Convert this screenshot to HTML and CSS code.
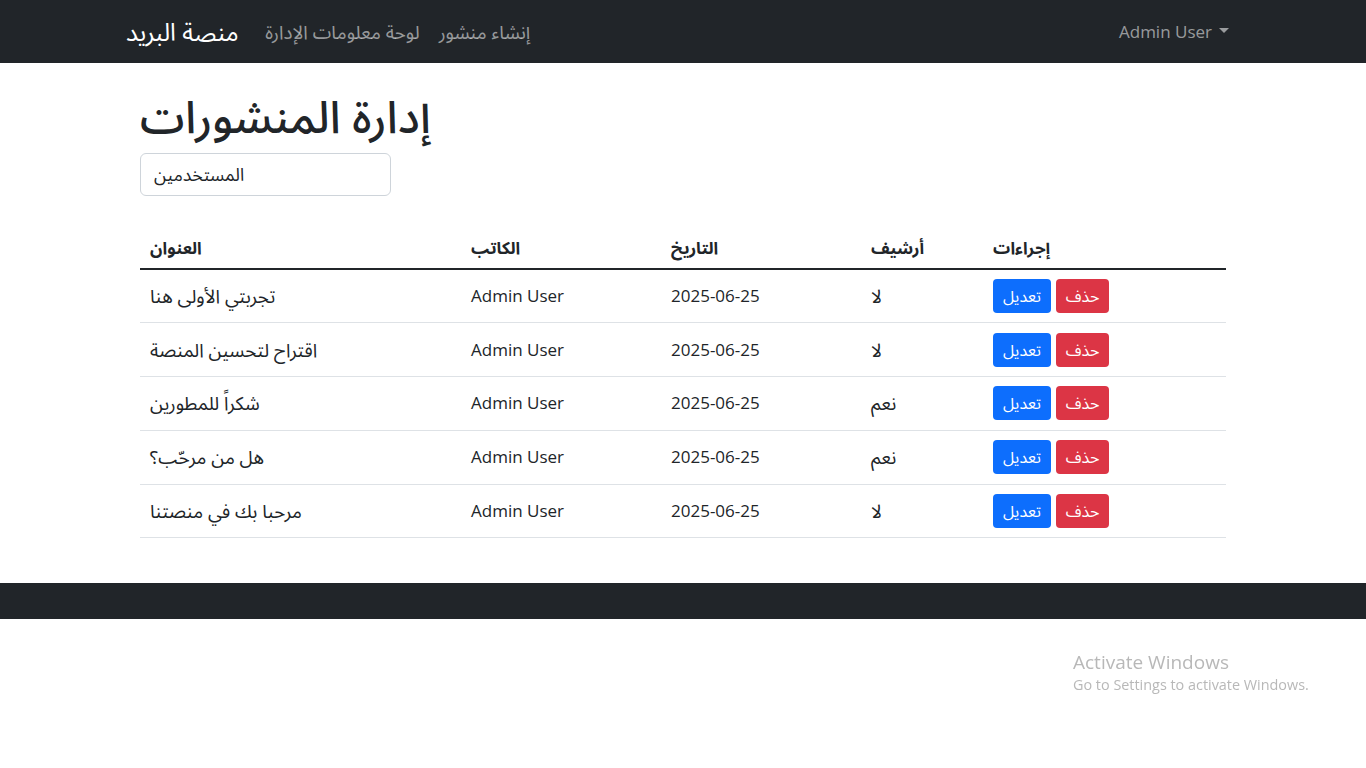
FILE: index.html
```html
<!DOCTYPE html>
<html lang="ar">
<head>
<meta charset="utf-8">
<title>إدارة المنشورات</title>
<link rel="stylesheet" href="styles.css">
</head>
<body>
<nav class="navbar">
  <div class="nav-container">
    <a class="brand" href="#">منصة البريد</a>
    <ul class="nav-links">
      <li><a href="#">لوحة معلومات الإدارة</a></li>
      <li><a href="#">إنشاء منشور</a></li>
    </ul>
    <div class="user-menu"><a href="#">Admin User</a><span class="caret"></span></div>
  </div>
</nav>

<main class="main">
  <h1 class="title">إدارة المنشورات</h1>
  <div class="filter">المستخدمين</div>

  <table class="posts">
    <thead>
      <tr>
        <th class="c-title">العنوان</th>
        <th class="c-author">الكاتب</th>
        <th class="c-date">التاريخ</th>
        <th class="c-arch">أرشيف</th>
        <th class="c-act">إجراءات</th>
      </tr>
    </thead>
    <tbody>
      <tr>
        <td class="ar">تجربتي الأولى هنا</td>
        <td>Admin User</td>
        <td>2025-06-25</td>
        <td class="ar">لا</td>
        <td><span class="btn btn-edit">تعديل</span><span class="btn btn-del">حذف</span></td>
      </tr>
      <tr>
        <td class="ar">اقتراح لتحسين المنصة</td>
        <td>Admin User</td>
        <td>2025-06-25</td>
        <td class="ar">لا</td>
        <td><span class="btn btn-edit">تعديل</span><span class="btn btn-del">حذف</span></td>
      </tr>
      <tr>
        <td class="ar">شكراً للمطورين</td>
        <td>Admin User</td>
        <td>2025-06-25</td>
        <td class="ar">نعم</td>
        <td><span class="btn btn-edit">تعديل</span><span class="btn btn-del">حذف</span></td>
      </tr>
      <tr>
        <td class="ar">هل من مرحّب؟</td>
        <td>Admin User</td>
        <td>2025-06-25</td>
        <td class="ar">نعم</td>
        <td><span class="btn btn-edit">تعديل</span><span class="btn btn-del">حذف</span></td>
      </tr>
      <tr>
        <td class="ar">مرحبا بك في منصتنا</td>
        <td>Admin User</td>
        <td>2025-06-25</td>
        <td class="ar">لا</td>
        <td><span class="btn btn-edit">تعديل</span><span class="btn btn-del">حذف</span></td>
      </tr>
    </tbody>
  </table>
</main>

<footer class="footer"></footer>

<div class="watermark">
  <div class="wm-title">Activate Windows</div>
  <div class="wm-sub">Go to Settings to activate Windows.</div>
</div>
</body>
</html>
```

FILE: styles.css
```css
* { box-sizing: border-box; }
html, body { margin: 0; padding: 0; }
body {
  font-family: "Open Sans", "Noto Sans Arabic", "DejaVu Sans", sans-serif;
  font-size: 17px;
  line-height: 1.5;
  color: #212529;
  background: #fff;
}
a { text-decoration: none; }

.navbar {
  background: #212529;
  height: 63px;
}
.nav-container {
  width: 1140px;
  margin: 0 auto;
  padding: 0 12px;
  height: 100%;
  display: flex;
  align-items: center;
}
.brand {
  color: #fff;
  font-size: 24.5px;
  line-height: 30px;
  margin-right: 17px;
  margin-left: 1px;
}
.nav-links {
  list-style: none;
  margin: 0;
  padding: 0;
  display: flex;
  flex: 1;
}
.nav-links a {
  display: block;
  padding: 8px 9.5px;
  color: rgba(255,255,255,0.55);
  font-size: 18.8px;
  line-height: 24px;
}
.user-menu {
  display: flex;
  align-items: center;
  padding-right: 12px;
}
.user-menu a {
  display: block;
  padding: 8px 7px 8px 8px;
  color: rgba(255,255,255,0.55);
  font-size: 17px;
  line-height: 24px;
}
.caret {
  width: 0; height: 0;
  border-left: 5px solid transparent;
  border-right: 5px solid transparent;
  border-top: 5px solid rgba(255,255,255,0.55);
  margin-top: -2px;
}

.main {
  width: 1086px;
  margin: 0 auto;
  padding-top: 26px;
  padding-bottom: 45px;
}
.title {
  font-size: 45px;
  font-weight: 500;
  line-height: 54px;
  margin: 0 0 10px;
}
.filter {
  width: 251px;
  height: 43px;
  border: 1px solid #ced4da;
  border-radius: 6px;
  padding: 8px 13px;
  font-size: 17.7px;
  line-height: 24px;
  margin-bottom: 32px;
}

.posts {
  width: 100%;
  border-collapse: collapse;
}
.posts th {
  text-align: left;
  font-weight: 700;
  font-size: 17px;
  padding: 8px 10px;
  line-height: 24px;
  border-bottom: 2px solid #212529;
}
.posts td {
  padding: 8px 10px;
  height: 53.75px;
  border-bottom: 1px solid #dee2e6;
  vertical-align: middle;
  line-height: 24px;
}
.posts td.ar { font-size: 18.8px; }
.c-title { width: 321px; }
.c-author { width: 200px; }
.c-date { width: 200px; }
.c-arch { width: 122px; }

.btn {
  display: inline-block;
  vertical-align: middle;
  height: 34px;
  line-height: 34px;
  font-size: 16px;
  color: #fff;
  border-radius: 4px;
  text-align: center;
}
.btn-edit { background: #0d6efd; width: 58px; }
.btn-del { background: #dc3545; width: 53px; margin-left: 5px; }

.footer {
  background: #212529;
  height: 36px;
}

.watermark {
  position: fixed;
  left: 1073px;
  top: 649px;
  color: rgba(160,160,160,0.75);
  font-family: "Open Sans", "DejaVu Sans", sans-serif;
}
.wm-title { font-size: 19px; line-height: 26px; }
.wm-sub { font-size: 14.4px; line-height: 20px; }
```
